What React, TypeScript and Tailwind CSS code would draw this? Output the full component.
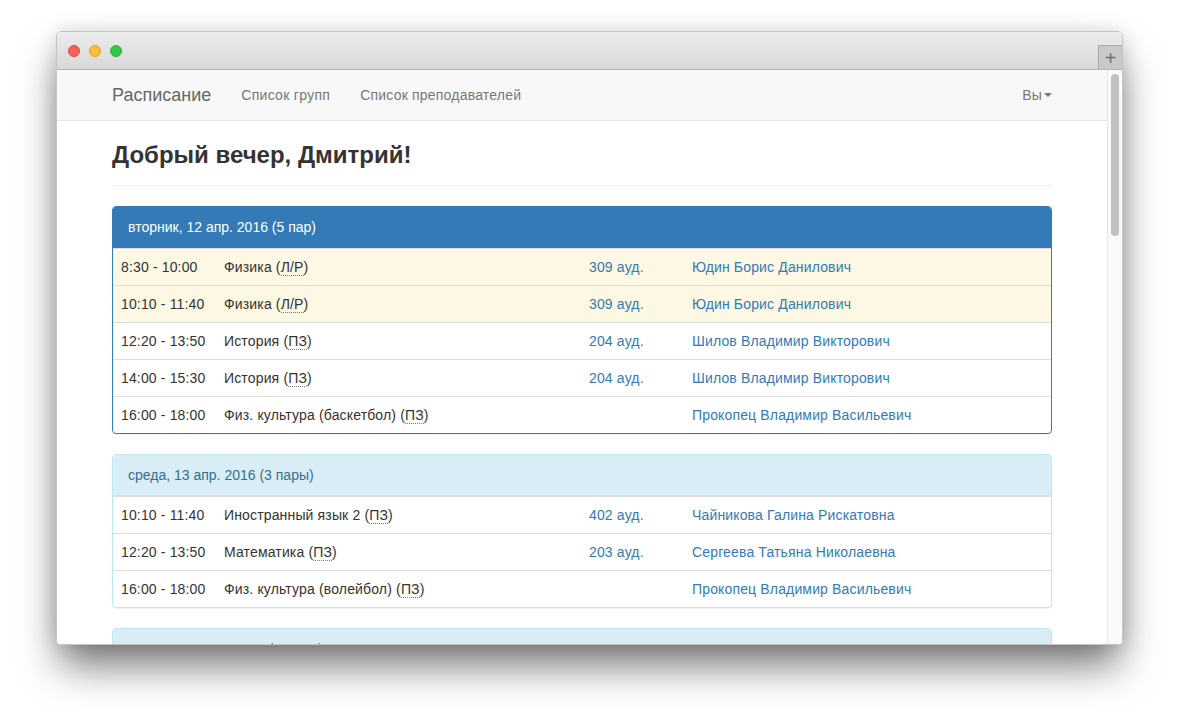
import React from 'react';

type Lesson = {
  time: string;
  subject: string;
  kind: string;
  room?: string;
  teacher: string;
  warn?: boolean;
};

type Day = {
  title: string;
  primary?: boolean;
  lessons: Lesson[];
};

const days: Day[] = [
  {
    title: 'вторник, 12 апр. 2016 (5 пар)',
    primary: true,
    lessons: [
      { time: '8:30 - 10:00', subject: 'Физика', kind: 'Л/Р', room: '309 ауд.', teacher: 'Юдин Борис Данилович', warn: true },
      { time: '10:10 - 11:40', subject: 'Физика', kind: 'Л/Р', room: '309 ауд.', teacher: 'Юдин Борис Данилович', warn: true },
      { time: '12:20 - 13:50', subject: 'История', kind: 'ПЗ', room: '204 ауд.', teacher: 'Шилов Владимир Викторович' },
      { time: '14:00 - 15:30', subject: 'История', kind: 'ПЗ', room: '204 ауд.', teacher: 'Шилов Владимир Викторович' },
      { time: '16:00 - 18:00', subject: 'Физ. культура (баскетбол)', kind: 'ПЗ', teacher: 'Прокопец Владимир Васильевич' },
    ],
  },
  {
    title: 'среда, 13 апр. 2016 (3 пары)',
    lessons: [
      { time: '10:10 - 11:40', subject: 'Иностранный язык 2', kind: 'ПЗ', room: '402 ауд.', teacher: 'Чайникова Галина Рискатовна' },
      { time: '12:20 - 13:50', subject: 'Математика', kind: 'ПЗ', room: '203 ауд.', teacher: 'Сергеева Татьяна Николаевна' },
      { time: '16:00 - 18:00', subject: 'Физ. культура (волейбол)', kind: 'ПЗ', teacher: 'Прокопец Владимир Васильевич' },
    ],
  },
  {
    // only the top of this panel is visible in the window
    title: 'четверг, 14 апр. 2016 (4 пары)',
    lessons: [],
  },
];

const DayPanel: React.FC<{ day: Day }> = ({ day }) => {
  const border = day.primary ? 'border-[#337ab7]' : 'border-[#bce8f1]';
  return (
    <div className={`mb-[20px] rounded-[4px] border bg-white shadow-[0_1px_1px_rgba(0,0,0,0.05)] ${border}`}>
      <div
        className={
          day.primary
            ? 'rounded-t-[3px] border-b border-[#337ab7] bg-[#337ab7] px-[15px] py-[10px] tracking-normal text-white'
            : 'rounded-t-[3px] border-b border-[#bce8f1] bg-[#d9edf7] px-[15px] py-[10px] tracking-normal text-[#31708f]'
        }
      >
        {day.title}
      </div>
      {day.lessons.map((l, i) => (
        <div
          key={i}
          className={`grid grid-cols-[103px_365px_103px_1fr] border-t border-[#ddd] ${l.warn ? 'bg-[#fcf8e3]' : ''}`}
        >
          <div className="p-2">{l.time}</div>
          <div className="p-2">
            {l.subject} (<abbr className="no-underline border-b border-dotted border-[#777] cursor-help">{l.kind}</abbr>)
          </div>
          <div className="p-2 text-[#337ab7]">{l.room}</div>
          <div className="p-2 text-[#337ab7]">{l.teacher}</div>
        </div>
      ))}
    </div>
  );
};

export default function App() {
  return (
    <div className="h-[724px] w-[1179px] overflow-hidden bg-white pl-[56px] pt-[31px] font-['Liberation_Sans',Arial,sans-serif] text-[14px] leading-[20px] tracking-[0.15px] text-[#333]">
      {/* Window */}
      <div className="w-[1067px] overflow-hidden rounded-[5px] border border-[#c4c4c4] shadow-[0_24px_40px_-4px_rgba(0,0,0,0.55),0_0_20px_rgba(0,0,0,0.12)]">
        {/* Title bar */}
        <div className="flex h-[38px] items-stretch justify-between border-b border-[#b4b4b4] bg-gradient-to-b from-[#ececec] to-[#d8d8d8]">
          <div className="flex items-center gap-[9px] pl-[11px] pt-[1px]">
            <span className="h-[12px] w-[12px] rounded-full border border-[#e2463f] bg-[#fc605c]" />
            <span className="h-[12px] w-[12px] rounded-full border border-[#e1a116] bg-[#fdbc40]" />
            <span className="h-[12px] w-[12px] rounded-full border border-[#2dac2f] bg-[#34c84a]" />
          </div>
          <div className="flex items-end">
            <div className="flex h-[24px] w-[24px] items-center justify-center border-l border-t border-[#a9a9a9] bg-[#c9c9c9] text-[20px] font-light leading-none tracking-normal text-[#707070]">
              +
            </div>
          </div>
        </div>

        {/* Content */}
        <div className="flex h-[574px] bg-white">
          <div className="w-[1051px] overflow-hidden">
            {/* Navbar */}
            <div className="flex h-[51px] items-center border-b border-[#e7e7e7] bg-[#f8f8f8] px-[55px]">
              <span className="mr-[30px] text-[18px] tracking-normal text-[#666]">Расписание</span>
              <span className="mr-[30px] tracking-[0.3px] text-[#777]">Список групп</span>
              <span className="tracking-[0.2px] text-[#777]">Список преподавателей</span>
              <span className="ml-auto flex items-center text-[#777]">
                Вы
                <span className="ml-[2px] h-0 w-0 border-x-4 border-t-4 border-x-transparent border-t-[#777]" />
              </span>
            </div>

            <div className="px-[55px]">
              <div className="mb-[20px] mt-[21px] border-b border-[#eee] pb-[17px]">
                <h1 className="text-[24px] font-bold leading-[26px] tracking-normal text-[#333]">Добрый вечер, Дмитрий!</h1>
              </div>
              {days.map((d) => (
                <DayPanel key={d.title} day={d} />
              ))}
            </div>
          </div>

          {/* Scrollbar */}
          <div className="w-[15px] border-l border-[#e6e6e6] bg-[#fafafa] pl-[3px] pt-[4px]">
            <div className="h-[162px] w-[8px] rounded-full bg-[#c1c1c1]" />
          </div>
        </div>
      </div>
    </div>
  );
}
